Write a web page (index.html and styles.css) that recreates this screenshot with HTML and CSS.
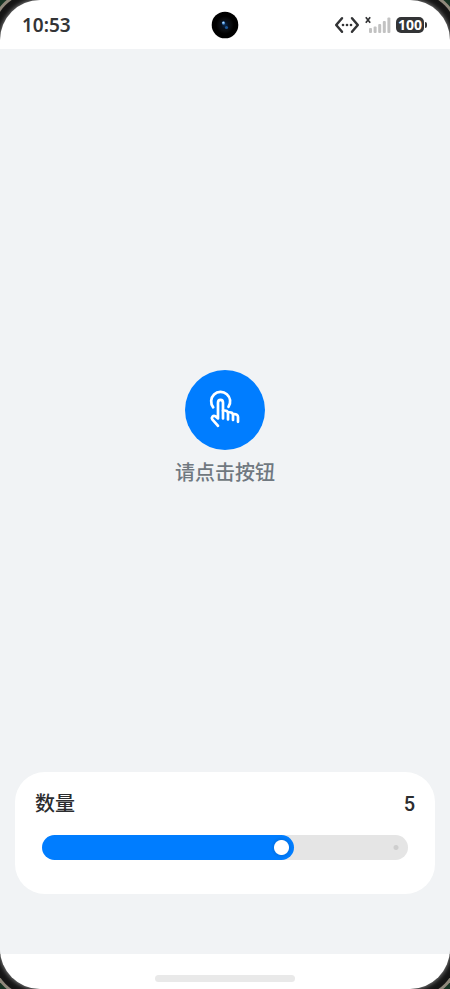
FILE: index.html
```html
<!DOCTYPE html>
<html lang="zh-CN">
<head>
<meta charset="utf-8">
<meta name="viewport" content="width=device-width, initial-scale=1">
<title>请点击按钮</title>
<link rel="stylesheet" href="styles.css">
</head>
<body>
<div class="screen">
  <header class="status">
    <time class="clock">10:53</time>
    <svg class="camera" viewBox="0 0 28 28" aria-hidden="true">
      <defs>
        <radialGradient id="lens"><stop offset="0" stop-color="#0b2a50"/><stop offset=".4" stop-color="#07101c"/><stop offset=".65" stop-color="#0b0d10"/><stop offset="1" stop-color="#000"/></radialGradient>
      </defs>
      <circle cx="14" cy="14" r="13.3" fill="#000"/>
      <circle cx="14" cy="14" r="9" fill="url(#lens)"/>
      <circle cx="12.5" cy="12" r="1.7" fill="#3f83c8"/>
      <circle cx="12.3" cy="11.6" r=".9" fill="#b5dcff"/>
      <circle cx="15.5" cy="16.5" r="1.6" fill="#1c5899"/>
    </svg>
    <div class="indicators">
      <svg class="link-icon" viewBox="0 0 26 18" aria-hidden="true">
        <path d="M8 2.2 2.2 9 8 15.8M18 2.2 23.8 9 18 15.8" fill="none" stroke="#333436" stroke-width="2.5" stroke-linecap="round" stroke-linejoin="round"/>
        <g fill="#333436"><circle cx="9" cy="9" r="1.3"/><circle cx="13" cy="9" r="1.3"/><circle cx="17" cy="9" r="1.3"/></g>
      </svg>
      <svg class="signal-icon" viewBox="0 0 26 18" aria-hidden="true">
        <path d="m.8 1.2 4.4 5.6M5.2 1.2.8 6.8" stroke="#333436" stroke-width="1.7"/>
        <g fill="#c2c2c2"><rect x="4" y="12" width="3" height="5" rx="1"/><rect x="8.6" y="10.5" width="3" height="6.5" rx="1"/><rect x="13.2" y="8" width="3" height="9" rx="1"/><rect x="17.8" y="5" width="3" height="12" rx="1"/><rect x="22.4" y="1.5" width="3" height="15.5" rx="1"/></g>
      </svg>
      <span class="battery">100</span>
    </div>
  </header>

  <main class="content">
    <section class="prompt">
      <button class="tap" type="button" aria-labelledby="tap-label">
        <svg viewBox="0 0 50 50" aria-hidden="true">
          <g fill="none" stroke="#fff" stroke-width="2.7" stroke-linecap="round" stroke-linejoin="round">
            <path d="M13.2 22.3A9.5 9.5 0 1 1 28.5 21.8"/>
            <path d="M18 40.8 12.3 34.4C11 32.5 13 30 15.4 31.2L18 33.4V17.8C18 13.9 23 13.9 23 17.8V33.5"/>
            <path d="M23 25.7C26.3 25 28 26.2 28 28.6V34.5M28 27.5C31.3 26.7 33 28 33 30.2V35M33 29.2C36.2 28.6 38 29.8 38 32V36.8"/>
          </g>
        </svg>
      </button>
      <span class="tap-label" id="tap-label">请点击按钮</span>
    </section>

    <section class="card">
      <div class="card-head">
        <label for="amount">数量</label>
        <output class="value" id="value" for="amount">5</output>
      </div>
      <input class="slider" id="amount" type="range" min="1" max="7" value="5">
    </section>
  </main>
  <footer class="nav"><span class="handle"></span></footer>
</div>
<script src="script.js"></script>
</body>
</html>
```
FILE: styles.css
```css
* { box-sizing: border-box; }

body {
  margin: 0;
  background: #173323;
  color: #2b2c2e;
  font-family: Roboto, "Noto Sans CJK SC", sans-serif;
}

.screen {
  display: flex;
  flex-direction: column;
  min-height: 100vh;
  overflow: hidden;
  border-radius: 40px;
  background: #fff;
  box-shadow: 0 0 4px 1px #777, 0 0 0 9px #151515, 0 0 0 12px #8f887b;
}

.status {
  display: grid;
  grid-template-columns: 1fr auto 1fr;
  align-items: center;
  height: 49px;
  padding: 2px 22px;
}

.clock {
  color: #333436;
  font-family: "Noto Sans", sans-serif;
  font-size: 19px;
  font-weight: 600;
}

.camera { width: 28px; height: 28px; }

.indicators {
  display: flex;
  align-items: center;
  justify-content: flex-end;
  gap: 5px;
}

.link-icon,
.signal-icon { width: 26px; height: 18px; }

.battery {
  position: relative;
  width: 28px;
  height: 16px;
  margin-right: 4px;
  border-radius: 5px;
  background: #333436;
  color: #fff;
  font-family: "Noto Sans", sans-serif;
  font-size: 14px;
  font-weight: 700;
  line-height: 16px;
  text-align: center;
}

.battery::after {
  content: "";
  position: absolute;
  top: 5px;
  right: -3px;
  width: 2px;
  height: 6px;
  border-radius: 0 2px 2px 0;
  background: #333436;
}

.content {
  display: flex;
  flex: 1;
  flex-direction: column;
  padding: 0 15px 60px;
  background: #f1f3f5;
}

.prompt {
  display: flex;
  flex: 1;
  flex-direction: column;
  align-items: center;
  justify-content: center;
  gap: 8px;
  padding-top: 36px;
}

.tap {
  display: grid;
  place-items: center;
  width: 80px;
  height: 80px;
  padding: 0;
  border: 0;
  border-radius: 50%;
  background: #007dff;
}

.tap svg { width: 50px; height: 50px; }

.tap-label {
  color: #707880;
  font-size: 20px;
  font-weight: 500;
  line-height: 30px;
}

.card {
  padding: 17px 20px 34px;
  border-radius: 30px;
  background: #fff;
}

.card-head {
  display: flex;
  align-items: center;
  justify-content: space-between;
  margin-bottom: 16px;
  font-size: 20px;
  font-weight: 500;
  line-height: 30px;
}

.slider {
  --ratio: 0.6667;
  appearance: none;
  display: block;
  width: calc(100% - 14px);
  height: 25px;
  margin: 0 7px;
  border-radius: 13px;
  background:
    linear-gradient(#007dff, #007dff) left / calc(13px + (100% - 25px) * var(--ratio)) 100% no-repeat,
    radial-gradient(circle at calc(100% - 12px) 50%, #cecece 2px, transparent 3px),
    #e5e5e5;
}

.slider::-webkit-slider-thumb {
  appearance: none;
  width: 25px;
  height: 25px;
  border-radius: 50%;
  background: radial-gradient(circle, #fff 7px, #0074ed 8px, #007dff 11px);
}

.nav {
  display: flex;
  justify-content: center;
  height: 35px;
  padding-top: 21px;
}

.handle {
  width: 140px;
  height: 7px;
  border-radius: 4px;
  background: #e9e9e9;
}
```
FILE: script.js
```js
const slider = document.getElementById("amount");
const value = document.getElementById("value");

slider.addEventListener("input", () => {
  const ratio = (slider.value - slider.min) / (slider.max - slider.min);
  slider.style.setProperty("--ratio", ratio);
  value.textContent = slider.value;
});
```
